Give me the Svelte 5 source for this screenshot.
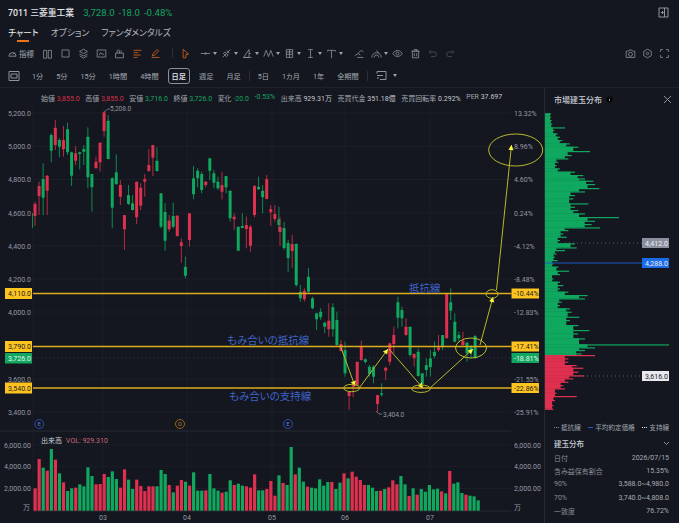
<script>
	// values traced off the chart: [colour, wick top, body top, body bottom, wick bottom]
	// first block is in 3x px from y=100, second in 3x px from y=270
	const first = [
		['r',305,312,348,378],['r',245,258,288,345],['g',190,237,293,345],['r',225,227,272,345],['g',100,105,152,187],
		['r',60,83,135,150],['g',115,120,140,172],['r',78,120,148,170],['g',68,88,157,165],['g',155,157,227,258],
		['r',138,160,182,195],['g',155,157,162,208],['g',135,147,155,195],['g',82,110,232,265],['g',222,222,262,335],
		['r',170,185,204,207],['r',127,128,187,215],['r',35,37,93,110],['g',45,62,177,178],['g',232,235,323,385],
		['g',163,217,252,255],['r',240,255,290,315],['r',345,345,388,450],['g',255,285,312,315],['g',285,310,330,332],
		['r',245,245,352,372],['r',250,263,317,330],['r',222,237,245,290],['r',147,195,213,215],['r',135,135,173,228],
		['g',142,182,213,215],['g',280,280,380,385],['g',310,336,422,452],['r',345,362,388,395],['g',308,348,380,385],
		['r',345,347,408,410],['r',415,427,438,488],['g',470,500,527,535],['r',340,340,420,440],['g',198,235,283,298],
		['g',205,212,235,262],['g',215,222,270,280],['r',243,245,255,262],['g',175,175,212,240],['g',210,220,248,265],
		['g',230,245,265,270],['r',215,255,275,298],['g',228,228,262,280],['g',272,272,355,365],['r',340,350,358,390],
		['g',380,380,452,452],['g',340,378,384,385],['r',350,375,387,445],['r',375,380,437,455],['r',255,258,345,352],
		['g',230,260,268,270],['g',255,272,292,340],['r',225,237,297,298],['r',315,327,337,378],['r',315,342,357,365],
		['g',320,358,375,392]
	];
	const second = [
		['r',-159,-129,-114,-72],['g',-144,-126,-66,-60],['g',-90,-81,-36,6],['r',-105,-78,-57,-6],['g',-80,-78,45,50],
		['g',45,65,85,95],['r',55,62,88,95],['g',-6,20,65,70],['g',80,85,115,118],['g',130,130,148,180],
		['g',115,125,142,150],['g',155,158,170,190],['r',100,152,178,200],['g',100,112,178,200],['g',125,150,225,228],
		['r',210,222,243,245],['g',215,240,310,320],['r',365,365,378,420],['r',335,340,350,382],['r',275,275,345,350],
		['r',212,230,270,272],['g',265,268,276,280],['g',285,290,312,320],['g',285,290,320,340],['r',375,375,402,425],
		['g',340,370,374,380],['r',290,293,302,330],['r',220,220,275,285],['r',170,195,222,250],['g',80,97,143,175],
		['g',110,120,145,170],['r',145,170,195,197],['g',170,170,255,260],['r',250,252,265,290],['g',235,245,318,320],
		['g',310,310,342,345],['g',265,285,300,320],['g',240,265,292,320],['g',215,245,258,265],['r',195,232,240,245],
		['g',195,195,232,240],['r',70,70,205,205],['g',55,97,122,150],['g',130,155,215,217],['g',185,195,205,215],
		['r',185,212,225,227],['g',215,218,250,275],['g',225,232,245,265],['g',195,198,265,266]
	];
	const candles = [
		...first.map((c, i) => ({ c: c[0], x: 35 + i * 4.065, v: c.slice(1).map((n) => 100 + n / 3) })),
		...second.map((c, i) => ({ c: c[0], x: 280 + i * 4.065, v: c.slice(1).map((n) => 270 + n / 3) }))
	];

	const volTops = 'r190 r102 g128 r137 g72 r104 g145 r172 g198 g190 r188 g178 g184 g127 g153 r178 r177 r147 g156 g139 g162 r188 r133 g164 g192 r164 r183 r198 r184 r184 g184 g135 g147 r180 g202 r182 r165 g170 r182 g142 g197 g197 r196 g147 g190 g197 r203 g200 g166 r180 g176 g182 r184 r188 r148 g196 g196 r192 r168 r212 g151 r174 g180 g66 r148 g128 g170 r185 g188 g190 g163 g182 g171 r171 g192 g173 r145 g160 r140 r155 r165 r180 g180 g188 g198 r197 g192 r187 r166 r178 g153 g178 r213 g190 r209 g192 g200 g180 g193 g191 r199 g205 r138 g176 g172 g204 r209 g212 g214 g226'
		.split(' ')
		.map((s, i) => ({ c: s[0], x: 35 + i * 4.065, y: 425 + Number(s.slice(1)) / 3 }));

	const priceAxis = [
		['5,200.0', 113], ['5,000.0', 146.5], ['4,800.0', 179.5], ['4,600.0', 213], ['4,400.0', 246],
		['4,200.0', 279], ['4,000.0', 312], ['3,600.0', 379], ['3,400.0', 412]
	];
	const pctAxis = [
		['13.32%', 113], ['8.96%', 146], ['4.60%', 179.5], ['0.24%', 213], ['-4.12%', 246],
		['-8.48%', 279.5], ['-12.83%', 312], ['-21.55%', 379], ['-25.91%', 412]
	];
	const levels = [
		{ y: 293.5, price: '4,110.0', pct: '-10.44%' },
		{ y: 346.5, price: '3,790.0', pct: '-17.41%' },
		{ y: 388, price: '3,540.0', pct: '-22.86%' }
	];
	const arrows = [
		[340, 345, 355, 386], [360, 387, 388, 349], [389, 349, 423, 388],
		[430, 388, 473, 349], [480, 345, 493, 297], [496.5, 290, 511.5, 145]
	].map(([x1, y1, x2, y2]) => {
		// small triangle at the end of each drawn line
		const a = Math.atan2(y2 - y1, x2 - x1);
		const pt = (d, off) => `${x2 - d * Math.cos(a) - off * Math.sin(a)},${y2 - d * Math.sin(a) + off * Math.cos(a)}`;
		return { x1, y1, x2, y2, tip: `${x2},${y2} ${pt(5, 2.6)} ${pt(5, -2.6)}` };
	});
	const rings = [
		[351.7, 388, 8, 3.7], [421, 388.7, 9.3, 3.7], [471, 348, 15.5, 10], [492, 294, 6, 4.3], [515.7, 150, 27, 16]
	];
	const months = [['03', 103], ['04', 187], ['05', 272], ['06', 345], ['07', 430]];

	// volume profile rows: [y in 3x px, width in 3x px]
	const profileTop = [[70,18],[80,18],[90,20],[100,22],[112,60],[120,28],[130,38],[140,45],[150,52],[160,75],[170,100],[183,135],[195,80],[205,70],[215,40],[225,35],[235,45],[245,90],[255,115],[265,120],[272,145],[282,150],[294,163],[304,120],[315,90],[325,85],[340,130],[350,90],[360,100],[370,120],[381,222],[392,150],[402,140],[412,165],[420,70],[430,55],[440,65],[450,45],[460,90],[472,95],[480,40],[490,15],[500,25]];
	const profileBottom = [[0,60],[10,35],[20,30],[30,38],[40,25],[50,40],[62,72],[72,45],[85,25],[95,45],[105,55],[115,45],[125,70],[135,128],[145,120],[155,50],[165,45],[175,75],[185,80],[200,103],[210,75],[225,100],[240,133],[250,100],[265,120],[283,372],[292,150],[300,120],[310,110],[315,150],[325,70],[335,70],[345,95],[353,115],[365,100],[376,118],[385,85],[395,70],[405,55],[415,60],[428,35],[438,95],[450,30],[465,25],[476,25]];
	const rows = [
		...profileTop.map(([y, w]) => ({ y: 90 + y / 3, w: w / 3, c: 'g' })),
		...profileBottom.map(([y, w]) => ({ y: 250 + y / 3, w: w / 3, c: y >= 315 ? 'r' : 'g' }))
	];
	// each row is a thin spike plus a shorter solid part joining it to the next row
	const spikes = rows.map((r) => ({ ...r, h: 1.2 }));
	const body = rows.slice(0, -1).map((r, i) => {
		const next = rows[i + 1];
		return { y: r.y, h: next.y - r.y + 0.2, c: r.c, w: Math.min(r.w, next.w) * 0.85 };
	});

	const toolsA = [
		'M2 3h4v10H2zM8 3h4v10H8z',
		'M2.500 2.500h9v9h-9z',
		'M7 1.500l5 2.800-5 2.800-5-2.800zM2 7.500l5 2.800 5-2.800M2 10l5 2.800 5-2.800',
		'M1.500 2.500h11v9h-11zM4 9l2-3 1.500 2 1-1 2 2',
		'M2 6.500h10v6H2zM4 6.500V4a1.500 1.500 0 013 0v2.500M9 6V3'
	];
	const toolsB = [
		{ d: 'M1 7h12M6 7a1 1 0 102 0 1 1 0 10-2 0' },
		{ d: 'M2 12L12 2M5 5l4 4-2 2-4-4zM7 3l4 4' },
		{ d: 'M2 12L9 2v10zM2 12h10M9 7h2' },
		{ d: 'M1 11l3-8 3 8 3-8 3 8' },
		{ d: 'M3 2h8v10H3zM3 5h8M3 8h8M7 2v10' },
		{ d: 'M4 2h6M4 12h6M7 2v10' },
		{ d: 'M2 3h10M7 3v10M2 3v1.500M12 3v1.500' }
	];
	const toolsC = [
		{ d: 'M1 10l4-3 3 2M4 12h8M9 3L5 7M9 3l3 2', caret: false },
		{ d: 'M1 12a6 6 0 0112 0M4 12a3 3 0 016 0M7 3l3 4', caret: true },
		{ d: 'M1 7s2.500-4 6-4 6 4 6 4-2.500 4-6 4-6-4-6-4zM5 7a2 2 0 104 0 2 2 0 10-4 0', caret: false },
		{ d: 'M3 4h8v8.500H3zM2 4h10M5 2h4v2M5.500 6.500v4M8.500 6.500v4', caret: false }
	];
	const periods = ['1分', '5分', '15分', '1時間', '4時間'];
	const legendRows = [
		['日付', '2026/07/15'],
		['含み益保有割合', '15.35%'],
		['90%', '3,588.0~4,980.0'],
		['70%', '3,740.0~4,808.0'],
		['一致度', '76.72%']
	];
</script>

<div class="page">
	<header class="quote">
		<span class="name">7011 三菱重工業</span>
		<span class="last">3,728.0</span>
		<span class="last">-18.0</span>
		<span class="last">-0.48%</span>
		<svg class="panel-toggle" width="11" height="11" viewBox="0 0 11 11">
			<path d="M1 1h9v9H1zM6.500 1v9M3 5.500h2M4 4l1.500 1.500L4 7" />
		</svg>
	</header>

	<nav class="tabs">
		<span class="tab active">チャート</span>
		<span class="tab">オプション</span>
		<span class="tab">ファンダメンタルズ</span>
	</nav>

	<div class="toolbar">
		<span class="ind">
			<svg class="small" viewBox="0 0 10 10"><path d="M1 8a4 4 0 118 0zM5 6l2-2" /></svg>
			指標
		</span>
		{#each toolsA as d}
			<svg class="tool" viewBox="0 0 14 14"><path {d} /></svg>
		{/each}
		<svg class="tool hot" viewBox="0 0 14 14"><path d="M2 3h10M2 6h6M2 9h9M2 12h5" /></svg>
		<svg class="tool hot" viewBox="0 0 14 14"><path d="M2 12h10M3 10l1-3 5-5 2 2-5 5z" /></svg>
		<i class="sep"></i>
		<svg class="cursor" viewBox="0 0 14 14"><path d="M4 1.500l7 6.500H7.500v4.500H4z" /></svg>
		{#each toolsB as t}
			<span class="with-caret">
				<svg viewBox="0 0 14 14"><path d={t.d} /></svg>
				<b class="caret"></b>
			</span>
		{/each}
		<div class="tools-c">
			{#each toolsC as t}
				<span class="with-caret loose">
					<svg viewBox="0 0 14 14"><path d={t.d} /></svg>
					{#if t.caret}<b class="caret"></b>{/if}
				</span>
			{/each}
			<svg class="dim" viewBox="0 0 14 14"><path d="M3 5h6a3 3 0 010 6H5M3 5l2-2M3 5l2 2" /></svg>
			<svg class="dim" viewBox="0 0 14 14"><path d="M11 5H5a3 3 0 000 6h4M11 5L9 3M11 5L9 7" /></svg>
		</div>
		<div class="tools-right">
			<svg viewBox="0 0 14 14"><path d="M1.500 4h3l1-1.500h3l1 1.500h3v8h-11zM4.500 8a2.500 2.500 0 105 0 2.500 2.500 0 10-5 0" /></svg>
			<svg viewBox="0 0 14 14"><path d="M7 1.500l4.800 2.700v5.600L7 12.500 2.200 9.800V4.200zM5.500 7a1.500 1.500 0 103 0 1.500 1.500 0 10-3 0" /></svg>
			<svg viewBox="0 0 14 14"><path d="M2 5V2h3M9 2h3v3M12 9v3H9M5 12H2V9" /></svg>
		</div>
	</div>

	<div class="periods">
		<svg class="cal" width="12" height="12" viewBox="0 0 12 12"><path d="M1 1.500h10v9H1zM3 4h6v4H3z" /></svg>
		{#each periods as p}<span class="period">{p}</span>{/each}
		<span class="period current">日足</span>
		<span class="period">週足</span>
		<span class="period">月足</span>
		<i class="sep short"></i>
		<span class="period">5日</span>
		<span class="period">1カ月</span>
		<span class="period">1年</span>
		<span class="period">全期間</span>
		<i class="sep short"></i>
		<svg class="cal2" width="12" height="12" viewBox="0 0 12 12"><path d="M1 3.500V1.500h9v8H4M1 5.500h6M1 8h2" /></svg>
		<b class="caret"></b>
	</div>

	<div class="main">
		<section class="chart">
			<div class="ohlc">
				<span>始値 <em class="r">3,855.0</em></span>
				<span>高値 <em class="r">3,855.0</em></span>
				<span>安値 <em class="g">3,716.0</em></span>
				<span>終値 <em class="g">3,726.0</em></span>
				<span>変化 <em class="g">-20.0</em></span>
				<span><em class="g">-0.53%</em></span>
				<span>出来高 <strong>929.31万</strong></span>
				<span>売買代金 <strong>351.18億</strong></span>
				<span>売買回転率 <strong>0.292%</strong></span>
				<span>PER <strong>37.697</strong></span>
			</div>
			<svg width="544" height="435" viewBox="0 88 544 435">
				<!-- grid -->
				{#each priceAxis as [, y]}
					<line class="grid" x1="33" x2="511" y1={y} y2={y} />
				{/each}
				{#each months as [, x]}
					<line class="grid" x1={x} x2={x} y1="106" y2="510" />
				{/each}
				<line class="grid" x1="33" x2="33" y1="106" y2="510" />
				<line class="divider" x1="0" x2="511" y1="431" y2="431" />
				<line class="divider" x1="33" x2="511" y1="511" y2="511" />

				{#each priceAxis as [label, y]}
					<text class="axis" x="8" y={y + 2.500}>{label}</text>
				{/each}
				{#each pctAxis as [label, y]}
					<text class="axis" x="514" y={y + 2.500}>{label}</text>
				{/each}

				<line class="g-wick" x1="32.500" x2="32.500" y1="213" y2="228" />
				{#each candles as k}
					<line class={k.c + '-wick'} x1={k.x} x2={k.x} y1={k.v[0]} y2={k.v[3]} />
					<rect class={k.c + '-fill'} x={k.x - 1.500} y={k.v[1]} width="3" height={Math.max(k.v[2] - k.v[1], 1.500)} rx="0.500" />
				{/each}

				<path class="leader" d="M104 112l4-3h2" />
				<text class="note" x="110" y="110.500">5,208.0</text>
				<path class="leader" d="M376 411l3 3h3" />
				<text class="note" x="383" y="417">3,404.0</text>

				<line class="last-dot" x1="33" x2="511" y1="358" y2="358" />
				{#each levels as l}
					<line class="level" x1="33" x2="511.500" y1={l.y} y2={l.y} />
					<rect class="tag" x="5" y={l.y - 5.500} width="27" height="11" />
					<text class="tag-text" x="8" y={l.y + 2.500}>{l.price}</text>
					<rect class="tag" x="511.500" y={l.y - 5} width="27.500" height="10" />
					<text class="tag-text" x="514" y={l.y + 2.500}>{l.pct}</text>
				{/each}
				<rect class="g-fill" x="5" y="353" width="27" height="10.500" />
				<text class="tag-text white" x="8" y="361">3,726.0</text>
				<rect class="g-fill" x="511.500" y="353" width="27.500" height="10" />
				<text class="tag-text white" x="514" y="361">-18.81%</text>

				{#each arrows as a}
					<line class="arrow" x1={a.x1} y1={a.y1} x2={a.x2} y2={a.y2} />
					<polygon class="tip" points={a.tip} />
				{/each}
				{#each rings as [cx, cy, rx, ry]}
					<ellipse class="ring" {cx} {cy} {rx} {ry} />
				{/each}

				<text class="draw" x="409" y="292">抵抗線</text>
				<text class="draw" x="227" y="343.500">もみ合いの抵抗線</text>
				<text class="draw" x="229" y="400">もみ合いの支持線</text>

				<!-- event markers -->
				<g class="mark blue">
					<circle cx="39.300" cy="424" r="4.500" /><text x="39.300" y="426.300">E</text>
				</g>
				<g class="mark amber">
					<circle cx="180" cy="424" r="4.500" /><text x="180" y="426.300">D</text>
				</g>
				<g class="mark blue">
					<circle cx="288" cy="424" r="4.500" /><text x="288" y="426.300">E</text>
				</g>

				<!-- volume -->
				<text class="vol-title" x="41" y="443">出来高</text>
				<text class="vol-val" x="66" y="443">VOL: 929.310</text>
				{#each [['6,000.00', 445], ['4,000.00', 466.700], ['2,000.00', 488.600]] as [label, y]}
					<line class="grid" x1="33" x2="511" y1={y} y2={y} />
					<text class="axis" x="4" y={y + 2.500}>{label}</text>
					<text class="axis" x="514" y={y + 2.500}>{label}</text>
				{/each}
				<text class="axis" x="23" y="510">万</text>
				<text class="axis" x="514" y="510">万</text>
				{#each volTops as b}
					<rect class={b.c + '-fill'} x={b.x - 1.500} y={b.y} width="3.200" height={510.700 - b.y} />
				{/each}
				{#each months as [label, x]}
					<text class="axis mid" x={x} y="520">{label}</text>
				{/each}
			</svg>
		</section>

		<aside class="side">
			<div class="side-head">
				<span class="side-title">市場建玉分布</span>
				<svg width="7" height="7" viewBox="0 0 7 7"><circle cx="3.500" cy="3.500" r="3" /><path d="M3.500 3v2M3.500 1.800v.500" /></svg>
				<svg class="close" width="9" height="9" viewBox="0 0 9 9"><path d="M1 1l7 7M8 1L1 8" /></svg>
			</div>
			<svg class="profile" width="134" height="308" viewBox="0 110 134 308">
				{#each body as p}
					<rect class={p.c + '-fill'} x="0" y={p.y} width={p.w} height={p.h} />
				{/each}
				{#each spikes as p}
					<rect class={p.c + '-fill'} x="0" y={p.y} width={p.w} height={p.h} />
				{/each}
				<line class="dots" x1="20" x2="97" y1="243" y2="243" />
				<rect x="97" y="238" width="27" height="10" fill="#8a90a0" />
				<text class="tag-text white" x="100" y="245.500">4,412.0</text>
				<line class="avg" x1="0" x2="97" y1="263" y2="263" />
				<rect x="97" y="258" width="27" height="10" fill="#1a6ce8" />
				<text class="tag-text white" x="100" y="265.500">4,288.0</text>
				<line class="dots" x1="30" x2="97" y1="376" y2="376" />
				<rect x="97" y="371" width="27" height="10" fill="#e8eaf0" />
				<text class="tag-text" x="100" y="378.500">3,616.0</text>
			</svg>
			<div class="key">
				<span><i class="dash light"></i>抵抗線</span>
				<span><i class="dash blue"></i>平均約定価格</span>
				<span><i class="dash white"></i>支持線</span>
			</div>
			<div class="section-head">
				<span>建玉分布</span>
				<svg width="7" height="5" viewBox="0 0 7 5"><path d="M1 1l2.500 2.500L6 1" /></svg>
			</div>
			{#each legendRows as [k, v]}
				<div class="row"><span>{k}</span><span class="val">{v}</span></div>
			{/each}
		</aside>
	</div>
</div>

<style>
	:global(body) {
		background: #14171f;
		overflow: hidden;
	}
	.page {
		width: 679px;
		height: 523px;
		color: #a2a7b1;
		font-family: Roboto, 'Noto Sans CJK JP', sans-serif;
		font-feature-settings: 'palt';
		overflow: hidden;
	}
	svg path {
		fill: none;
		stroke: #8f949e;
		stroke-width: 1;
	}

	.quote {
		display: flex;
		align-items: center;
		height: 25px;
		padding-left: 8px;
		gap: 4px;
		font-size: 9.600px;
	}
	.name {
		color: #e4e6ea;
		font-weight: 500;
		font-size: 8.800px;
		margin-right: 5px;
	}
	.last {
		color: #14a562;
	}
	.panel-toggle {
		margin-left: auto;
		margin-right: 10px;
	}

	.tabs {
		display: flex;
		gap: 12px;
		padding-left: 8px;
		height: 16px;
		font-size: 8.800px;
		align-items: center;
	}
	.tab {
		color: #b4b8c0;
		position: relative;
		line-height: 16px;
	}
	.tab.active {
		color: #f0f0f2;
	}
	.tab.active::after {
		content: '';
		position: absolute;
		left: 9px;
		width: 12px;
		bottom: -1px;
		height: 2px;
		background: #e8751a;
	}

	.toolbar {
		display: flex;
		align-items: center;
		height: 22px;
		margin-top: 1px;
		padding-left: 8px;
		font-size: 7.500px;
	}
	.toolbar svg {
		width: 11px;
		height: 11px;
		flex: none;
	}
	.toolbar svg.small {
		width: 9px;
		height: 9px;
	}
	.ind {
		display: flex;
		align-items: center;
		gap: 2px;
		width: 33.500px;
	}
	.tool {
		margin-right: 7px;
	}
	.hot path {
		stroke: #d9691c;
	}
	.sep {
		width: 1px;
		height: 10px;
		background: #2b2f38;
		margin: 0 7px 0 4px;
	}
	.cursor {
		margin-right: 9px;
	}
	.cursor path {
		stroke: #d9691c;
	}
	.with-caret {
		display: flex;
		align-items: center;
		gap: 2px;
		width: 21px;
	}
	.caret {
		width: 0;
		height: 0;
		border-left: 2.500px solid transparent;
		border-right: 2.500px solid transparent;
		border-top: 3px solid #9ba0aa;
	}
	.tools-c {
		display: flex;
		align-items: center;
		margin-left: 7px;
	}
	.with-caret.loose {
		width: 17.500px;
	}
	.with-caret.loose:nth-child(2) {
		width: 21px;
	}
	.dim {
		margin-right: 7px;
	}
	.dim path {
		stroke: #4d525c;
	}
	.tools-right {
		display: flex;
		gap: 6px;
		margin-left: auto;
		margin-right: 9px;
	}

	.periods {
		display: flex;
		align-items: center;
		height: 23px;
		padding-left: 8px;
		font-size: 7.200px;
		border-bottom: 1px solid #1e222b;
	}
	.cal {
		margin-right: 12px;
	}
	.cal2 {
		margin: 0 5px 0 0;
	}
	.period {
		margin-right: 13px;
		white-space: nowrap;
	}
	.period.current {
		color: #e8eaee;
		border: 1px solid #8b909a;
		border-radius: 3px;
		padding: 2px 3px;
		font-weight: 500;
		margin-left: -4px;
		margin-right: 9px;
	}
	.sep.short {
		margin: 0 8px 0 -5px;
	}

	.main {
		display: flex;
		height: 435px;
	}
	.chart {
		position: relative;
		width: 544px;
		border-right: 1px solid #262a33;
	}
	.chart svg {
		display: block;
	}
	.ohlc {
		position: absolute;
		top: 5px;
		left: 41px;
		display: flex;
		gap: 5.500px;
		font-size: 7px;
		white-space: nowrap;
	}
	.ohlc em {
		font-style: normal;
	}
	.ohlc strong {
		font-weight: 400;
		color: #c4c7ce;
	}
	.r {
		color: #d92f4c;
	}
	.g {
		color: #14a562;
	}

	.grid {
		stroke: #1b1f28;
		stroke-width: 1;
	}
	.divider {
		stroke: #262a33;
		stroke-width: 1;
	}
	.axis {
		fill: #9499a4;
		font-size: 7px;
	}
	.mid {
		text-anchor: middle;
	}
	.note {
		fill: #9499a4;
		font-size: 6.500px;
	}
	.leader {
		stroke: #8b909a;
		stroke-width: 0.700;
	}
	.g-wick {
		stroke: #0d8a50;
		stroke-width: 1;
	}
	.r-wick {
		stroke: #b82a43;
		stroke-width: 1;
	}
	.g-fill {
		fill: #10a75f;
	}
	.r-fill {
		fill: #e0304f;
	}
	.level {
		stroke: #dcae1c;
		stroke-width: 1.500;
	}
	.tag {
		fill: #fdc41f;
	}
	.tag-text {
		fill: #1c1d22;
		font-size: 7px;
	}
	.tag-text.white {
		fill: #eef0f3;
	}
	.last-dot {
		stroke: #3a3f49;
		stroke-width: 0.700;
		stroke-dasharray: 1 3;
	}
	.arrow {
		stroke: #b9b92e;
		stroke-width: 1;
	}
	.tip {
		fill: #fafa3c;
	}
	.ring {
		fill: none;
		stroke: #b9b92e;
		stroke-width: 1;
	}
	.draw {
		fill: #3f63c9;
		font-size: 10.500px;
	}
	.mark circle {
		fill: none;
		stroke-width: 0.900;
	}
	.mark text {
		font-size: 6px;
		text-anchor: middle;
	}
	.mark.blue circle {
		stroke: #3052b8;
	}
	.mark.blue text {
		fill: #5a7bd8;
	}
	.mark.amber circle {
		stroke: #a86a18;
	}
	.mark.amber text {
		fill: #b87a20;
	}
	.vol-title {
		fill: #c8ccd2;
		font-size: 7px;
	}
	.vol-val {
		fill: #c86a78;
		font-size: 7px;
	}

	.side {
		flex: 1;
		min-width: 0;
		display: flex;
		flex-direction: column;
	}
	.side-head {
		display: flex;
		align-items: center;
		gap: 4px;
		height: 22px;
		padding: 0 7px 0 9px;
		font-size: 8px;
		color: #c8cbd2;
		font-weight: 500;
		flex: none;
	}
	.close {
		margin-left: auto;
	}
	.profile {
		display: block;
		flex: none;
	}
	.dots {
		stroke: #6a6f7a;
		stroke-width: 0.800;
		stroke-dasharray: 1 3;
	}
	.avg {
		stroke: #1a5cc0;
		stroke-width: 1;
	}
	.key {
		display: flex;
		align-items: center;
		gap: 7.500px;
		padding-left: 9px;
		font-size: 6.600px;
		white-space: nowrap;
		height: 18px;
		flex: none;
	}
	.key span {
		display: flex;
		align-items: center;
		gap: 2px;
	}
	.dash {
		width: 5px;
		height: 0;
		border-top: 1.500px dotted #8b909a;
	}
	.dash.blue {
		border-top: 1.500px solid #1a5cc0;
	}
	.dash.white {
		border-top: 1.500px dotted #e8eaf0;
	}
	.section-head {
		display: flex;
		justify-content: space-between;
		align-items: center;
		height: 15px;
		padding: 0 9px;
		font-size: 7.500px;
		font-weight: 500;
		color: #c8cbd2;
		flex: none;
	}
	.row {
		display: flex;
		justify-content: space-between;
		align-items: center;
		height: 13.300px;
		padding: 0 10px 0 9px;
		font-size: 7px;
		color: #868b96;
		flex: none;
	}
	.val {
		color: #a8acb5;
	}
</style>
